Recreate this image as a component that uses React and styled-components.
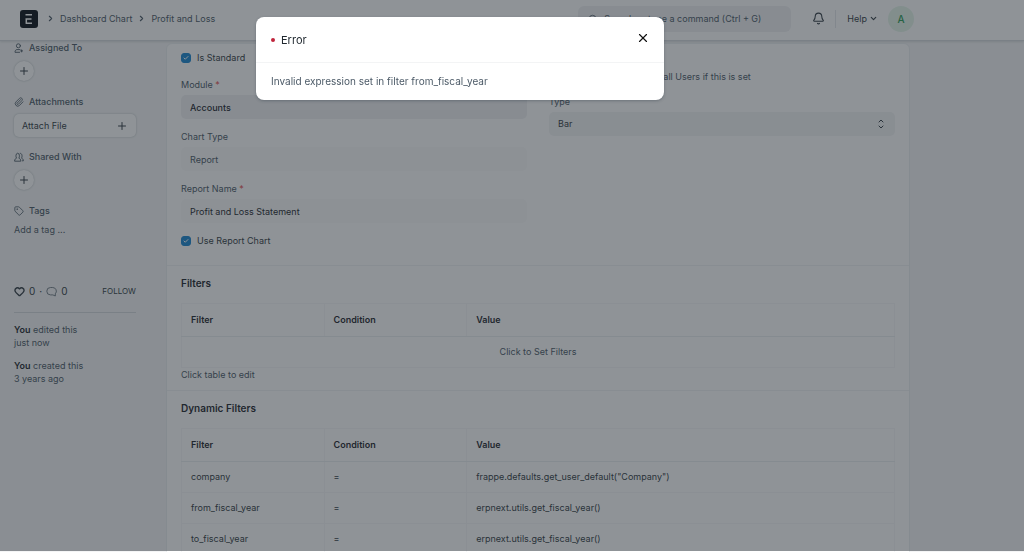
import React from "react";
import styled, { createGlobalStyle } from "styled-components";
import { Bell, Check, ChevronDown, ChevronRight, Heart, Paperclip, Plus, Search, Tag, X } from "lucide-react";

const GlobalStyle = createGlobalStyle`
  *, *::before, *::after { box-sizing: border-box; }
  html, body { margin: 0; height: 100%; }
  body {
    overflow: hidden;
    background: #f4f5f6;
    color: #333c44;
    font: 400 9px/14px Inter, "Liberation Sans", sans-serif;
  }
  button, input, select { font: inherit; color: inherit; }
  p, h2, h3, ul, ol { margin: 0; padding: 0; }
  a { color: inherit; text-decoration: none; }
`;

const Navbar = styled.header`
  height: 41px;
  padding: 0 110px 3px 20px;
  display: flex;
  align-items: center;
  background: #fff;
  border-bottom: 1px solid #d5d8dc;
  box-shadow: 0 1px 2px rgba(25, 39, 52, 0.12);
`;

const Logo = styled.a`
  display: flex;
  margin-right: 8px;
`;

const Breadcrumbs = styled.nav`
  display: flex;
  align-items: center;
  gap: 5px;
  flex: 1;
  color: #4c5a67;
`;

const SearchBox = styled.label`
  width: 213px;
  height: 26px;
  margin-right: 21px;
  padding: 0 10px;
  display: flex;
  align-items: center;
  gap: 6px;
  border-radius: 6px;
  background: #f0f1f3;
  color: #4c5a67;

  input {
    flex: 1;
    min-width: 0;
    padding: 0;
    border: 0;
    background: none;
  }
  input::placeholder { color: #4c5a67; opacity: 1; }
`;

const NavButton = styled.button`
  display: flex;
  align-items: center;
  gap: 2px;
  padding: 0;
  border: 0;
  background: none;
  color: #333c44;
`;

const NavDivider = styled.span`
  width: 1px;
  height: 18px;
  margin: 0 11px 0 10px;
  background: #e4e7ea;
`;

const Avatar = styled.button`
  width: 26px;
  height: 26px;
  margin-left: 10px;
  padding: 0;
  border: 0;
  border-radius: 50%;
  background: #e4f5e9;
  color: #2f9d58;
  font-size: 10px;
  font-weight: 500;
`;

const Page = styled.main`
  padding: 0 114px 0 14px;
  display: grid;
  grid-template-columns: 122px minmax(0, 1fr);
  gap: 30px;
`;

const SideGroup = styled.section`
  display: flex;
  flex-direction: column;
  align-items: flex-start;
  gap: 5px;
  margin-bottom: 13px;
`;

const SideTitle = styled.h3`
  display: flex;
  align-items: center;
  gap: 5px;
  font: inherit;
  font-weight: 500;
  color: #4c5a67;
`;

const RoundButton = styled.button`
  width: 20px;
  height: 20px;
  margin: 1px 0;
  padding: 0;
  display: grid;
  place-items: center;
  border: 0;
  border-radius: 50%;
  background: #fff;
  box-shadow: 0 0 2px rgba(25, 39, 52, 0.3);
`;

const AttachButton = styled.button`
  width: 100%;
  height: 23px;
  padding: 0 8px;
  display: flex;
  align-items: center;
  justify-content: space-between;
  border: 0;
  border-radius: 5px;
  background: #fff;
  box-shadow: 0 0 2px rgba(25, 39, 52, 0.3);
`;

const TagButton = styled.button`
  padding: 0;
  border: 0;
  background: none;
  color: #4c5a67;
`;

const Stats = styled.div`
  display: flex;
  align-items: center;
  gap: 4px;
  margin-top: 47px;
  padding-bottom: 14px;
  border-bottom: 1px solid #d5d8dc;
  font-size: 10px;
`;

const FollowLink = styled.a`
  margin-left: auto;
  font-size: 8px;
`;

const History = styled.ul`
  display: grid;
  gap: 10px;
  padding-top: 10px;
  list-style: none;
  line-height: 13px;
  color: #4c5a67;

  b { font-weight: 600; color: #1f272e; }
  span { display: block; }
`;

const Card = styled.form`
  margin-top: 2px;
  border: 1px solid #ebeef0;
  border-radius: 6px;
  background: #fff;
`;

const Columns = styled.div`
  display: grid;
  grid-template-columns: 1fr 1fr;
  gap: 22px;
  padding: 7px 14px 4px;
`;

const CheckRow = styled.label`
  height: 14px;
  margin-bottom: ${(p) => (p.$tight ? 5 : 13)}px;
  display: flex;
  align-items: center;
  gap: 6px;
`;

const CheckBox = styled.span`
  position: relative;
  display: flex;

  input {
    width: 10px;
    height: 10px;
    margin: 0;
    appearance: none;
    border-radius: 3px;
    border: 1px solid #c0c6cc;
    background: #fff;
  }
  input:checked { border-color: #1a86d0; background: #1a86d0; }
  svg { position: absolute; top: 2px; left: 2px; color: #fff; pointer-events: none; }
`;

const Field = styled.div`
  margin-bottom: 11px;
`;

const FieldLabel = styled.label`
  display: block;
  margin-bottom: 3px;
  color: #4c5a67;

  em { color: #e24c4c; font-style: normal; }
`;

const TextBox = styled.input`
  display: block;
  width: 100%;
  height: 24px;
  padding: 0 9px;
  border: 0;
  border-radius: 5px;
  background: ${(p) => (p.$filled ? "#f0f1f3" : "#fafbfb")};
  color: ${(p) => (p.$muted ? "#4c5a67" : "#1f272e")};
  font-weight: ${(p) => (p.$filled ? 500 : 400)};
`;

const SelectWrap = styled.div`
  position: relative;

  select {
    display: block;
    width: 100%;
    height: 24px;
    padding: 0 9px;
    appearance: none;
    border: 0;
    border-radius: 5px;
    background: #f3f4f5;
    color: #333c44;
  }
  svg { position: absolute; right: 11px; top: 7px; pointer-events: none; }
`;

const Hint = styled.p`
  color: #4c5a67;
  ${(p) => p.$indented && "margin-bottom: 11px; padding-left: 8px;"}
`;

const Section = styled.section`
  padding: 9px 14px 8px;
  border-top: 1px solid #f1f2f4;
`;

const SectionTitle = styled.h2`
  margin-bottom: 12px;
  font-size: 10px;
  line-height: 16px;
  font-weight: 600;
  color: #1f272e;
`;

const FilterTable = styled.table`
  width: 100%;
  table-layout: fixed;
  border-collapse: collapse;

  th, td {
    height: 31px;
    padding: 0 9px;
    border: 1px solid #f6f7f8;
    text-align: left;
    font-weight: 400;
  }
  th { height: 33px; width: 60%; font-weight: 600; color: #1f272e; border-bottom-color: #ebeef0; }
  th:nth-child(-n + 2) { width: 20%; }
  td[colspan] { text-align: center; color: #4c5a67; }
`;

const Backdrop = styled.div`
  position: fixed;
  inset: 0 0 1px;
  padding: 17px 104px 0 0;
  display: flex;
  justify-content: center;
  align-items: flex-start;
  background: rgba(31, 39, 48, 0.5);
`;

const Dialog = styled.div`
  width: 100%;
  max-width: 408px;
  border-radius: 8px;
  background: #fff;
  box-shadow: 0 1px 3px rgba(25, 39, 52, 0.3);
`;

const DialogHeader = styled.div`
  height: 46px;
  padding: 0 14px 0 15px;
  display: flex;
  align-items: center;
  gap: 6px;
  border-bottom: 1px solid #f3f4f5;

  h2 { flex: 1; font-size: 11px; font-weight: 400; color: #1f272e; }
`;

const Dot = styled.span`
  width: 4px;
  height: 4px;
  border-radius: 50%;
  background: #c0243c;
`;

const CloseButton = styled.button`
  display: flex;
  padding: 0 0 4px;
  border: 0;
  background: none;
  color: #111;
`;

const DialogBody = styled.p`
  padding: 11px 15px 12px;
  font-size: 10px;
  color: #4c5a67;
`;

const LogoMark = () => (
  <svg width="18" height="18" viewBox="0 0 18 18" aria-hidden="true">
    <rect width="18" height="18" rx="3" fill="#0b1118" />
    <path d="M5.5 4.7H12M5.5 9h6M6.3 9v4.3M5.600 13.300H12" stroke="#fff" strokeWidth="1.5" fill="none" />
  </svg>
);

const AssignIcon = () => (
  <svg width="10" height="10" viewBox="0 0 10 10" fill="none" stroke="currentColor" strokeWidth="0.9" strokeLinecap="round" aria-hidden="true">
    <circle cx="4.4" cy="2.8" r="2" />
    <path d="M6 6.6H3C1.6 6.6 1 7.8 1 9.3h4.600M7.600 6.900v2M6.600 7.900h2" />
  </svg>
);

const ShareIcon = () => (
  <svg width="10" height="10" viewBox="0 0 10 10" fill="none" stroke="currentColor" strokeWidth="0.9" strokeLinecap="round" strokeLinejoin="round" aria-hidden="true">
    <path d="M.6 8.8c0-1.7.8-2 1.9-2.6C1.6 4.9 1.7 1.2 3.7 1.2s2.1 3.7 1.2 5c1.1.6 1.900.900 1.900 2.600z" />
    <path d="M6.2 1.3c2.2-.2 2.2 3.6 1.3 4.9 1.1.6 1.900.9 1.900 2.600H8.300" />
  </svg>
);

const CommentIcon = () => (
  <svg width="11" height="11" viewBox="0 0 11 11" fill="none" stroke="#68737d" strokeWidth="0.9" strokeLinejoin="round" aria-hidden="true">
    <path d="M9.300 10 6.900 8.900H4.500a3.700 3.700 0 0 1 0-7.400h2.200a3.700 3.700 0 0 1 2.600 6.300z" />
  </svg>
);

const SelectIcon = () => (
  <svg width="6" height="10" viewBox="0 0 6 10" fill="none" stroke="#333c44" strokeLinecap="round" strokeLinejoin="round" aria-hidden="true">
    <path d="M1 3 3 1l2 2M1 7l2 2 2-2" />
  </svg>
);

const Checkbox = ({ label, defaultChecked, tight }) => (
  <CheckRow $tight={tight}>
    <CheckBox>
      <input type="checkbox" defaultChecked={defaultChecked} />
      {defaultChecked && <Check size={6} strokeWidth={4} />}
    </CheckBox>
    {label}
  </CheckRow>
);

const TextField = ({ id, label, required, value, filled, muted }) => (
  <Field>
    <FieldLabel htmlFor={id}>
      {label} {required && <em>*</em>}
    </FieldLabel>
    <TextBox id={id} defaultValue={value} readOnly $filled={filled} $muted={muted} />
  </Field>
);

const Filters = ({ rows }) => (
  <FilterTable>
    <thead>
      <tr>
        <th>Filter</th>
        <th>Condition</th>
        <th>Value</th>
      </tr>
    </thead>
    <tbody>
      {rows.length === 0 && (
        <tr>
          <td colSpan={3}>Click to Set Filters</td>
        </tr>
      )}
      {rows.map(([name, condition, value]) => (
        <tr key={name}>
          <td>{name}</td>
          <td>{condition}</td>
          <td>{value}</td>
        </tr>
      ))}
    </tbody>
  </FilterTable>
);

const dynamicFilters = [
  ["company", "=", 'frappe.defaults.get_user_default("Company")'],
  ["from_fiscal_year", "=", "erpnext.utils.get_fiscal_year()"],
  ["to_fiscal_year", "=", "erpnext.utils.get_fiscal_year()"],
];

export default function App() {
  return (
    <>
      <GlobalStyle />
      <Navbar>
        <Logo href="#" aria-label="Home"><LogoMark /></Logo>
        <Breadcrumbs aria-label="Breadcrumb">
          <ChevronRight size={9} strokeWidth={3} />
          <a href="#chart">Dashboard Chart</a>
          <ChevronRight size={9} strokeWidth={3} />
          <a href="#profit">Profit and Loss</a>
        </Breadcrumbs>
        <SearchBox>
          <Search size={10} />
          <input type="text" aria-label="Search" placeholder="Search or type a command (Ctrl + G)" />
        </SearchBox>
        <NavButton type="button" aria-label="Notifications"><Bell size={13} /></NavButton>
        <NavDivider />
        <NavButton type="button">Help <ChevronDown size={9} strokeWidth={3} /></NavButton>
        <Avatar type="button">A</Avatar>
      </Navbar>

      <Page>
        <aside>
          <SideGroup>
            <SideTitle><AssignIcon />Assigned To</SideTitle>
            <RoundButton type="button" aria-label="Assign"><Plus size={12} strokeWidth={2} /></RoundButton>
          </SideGroup>
          <SideGroup>
            <SideTitle><Paperclip size={10} />Attachments</SideTitle>
            <AttachButton type="button">Attach File <Plus size={12} strokeWidth={2} /></AttachButton>
          </SideGroup>
          <SideGroup>
            <SideTitle><ShareIcon />Shared With</SideTitle>
            <RoundButton type="button" aria-label="Share"><Plus size={12} strokeWidth={2} /></RoundButton>
          </SideGroup>
          <SideGroup>
            <SideTitle><Tag size={10} />Tags</SideTitle>
            <TagButton type="button">Add a tag ...</TagButton>
          </SideGroup>
          <Stats>
            <Heart size={11} strokeWidth={3} />
            <span>0</span>
            <span>·</span>
            <CommentIcon />
            <span>0</span>
            <FollowLink href="#follow">FOLLOW</FollowLink>
          </Stats>
          <History>
            <li><b>You</b> edited this<span>just now</span></li>
            <li><b>You</b> created this<span>3 years ago</span></li>
          </History>
        </aside>

        <Card>
          <Columns>
            <div>
              <Checkbox label="Is Standard" defaultChecked />
              <TextField id="module" label="Module" required value="Accounts" filled />
              <TextField id="chart-type" label="Chart Type" value="Report" muted />
              <TextField id="report-name" label="Report Name" required value="Profit and Loss Statement" />
              <Checkbox label="Use Report Chart" defaultChecked />
            </div>
            <div>
              <Checkbox label="Is Public" tight />
              <Hint $indented>Chart will be available to all Users if this is set</Hint>
              <FieldLabel htmlFor="type">Type</FieldLabel>
              <SelectWrap>
                <select id="type" defaultValue="Bar">
                  <option>Bar</option>
                  <option>Line</option>
                </select>
                <SelectIcon />
              </SelectWrap>
            </div>
          </Columns>
          <Section>
            <SectionTitle>Filters</SectionTitle>
            <Filters rows={[]} />
            <Hint>Click table to edit</Hint>
          </Section>
          <Section>
            <SectionTitle>Dynamic Filters</SectionTitle>
            <Filters rows={dynamicFilters} />
          </Section>
        </Card>
      </Page>

      <Backdrop>
        <Dialog role="dialog" aria-modal="true" aria-labelledby="dialog-title">
          <DialogHeader>
            <Dot />
            <h2 id="dialog-title">Error</h2>
            <CloseButton type="button" aria-label="Close"><X size={14} strokeWidth={2} /></CloseButton>
          </DialogHeader>
          <DialogBody>Invalid expression set in filter from_fiscal_year</DialogBody>
        </Dialog>
      </Backdrop>
    </>
  );
}
